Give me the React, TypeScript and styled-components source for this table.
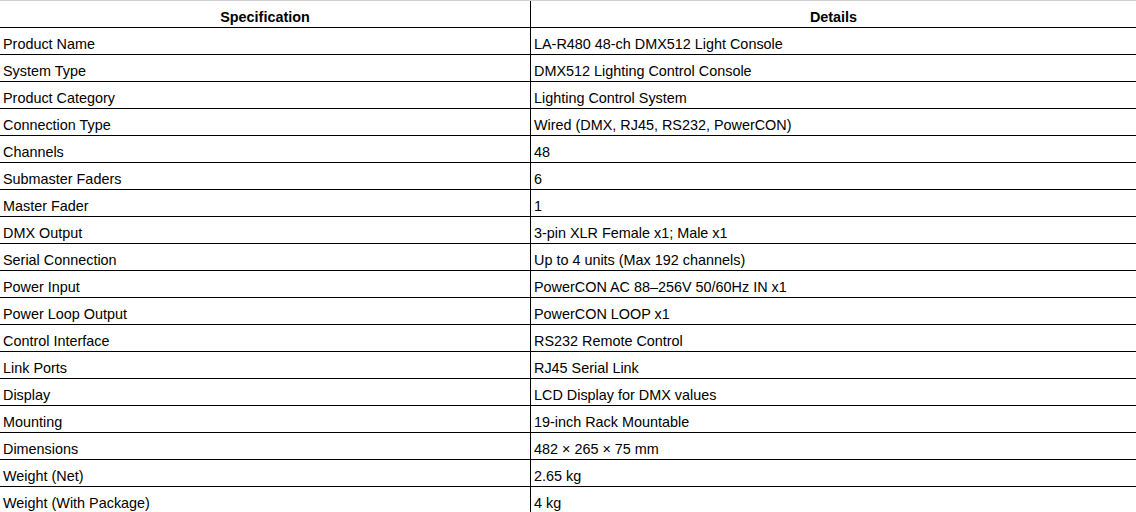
import React from "react";
import styled, { createGlobalStyle } from "styled-components";

const Global = createGlobalStyle`
  html, body { margin: 0; padding: 0; background: #fff; }
  body { font-family: "Liberation Sans", Arial, sans-serif; color: #000; }
`;

const Table = styled.div`
  width: 1136px;
  border-top: 1px solid #d0d0d0;
  display: grid;
  grid-template-columns: 531px 1fr;
`;

const Cell = styled.div<{ $head?: boolean; $first?: boolean }>`
  box-sizing: border-box;
  height: 27px;
  padding: 8px 3px 2px 3px;
  font-size: 14.4px;
  line-height: 16px;
  white-space: nowrap;
  overflow: hidden;
  border-bottom: 1px solid #000;
  border-right: ${(p) => (p.$first ? "1px solid #000" : "none")};
  font-weight: ${(p) => (p.$head ? 700 : 400)};
  text-align: ${(p) => (p.$head ? "center" : "left")};
`;

const rows: [string, string][] = [
  ["Product Name", "LA-R480 48-ch DMX512 Light Console"],
  ["System Type", "DMX512 Lighting Control Console"],
  ["Product Category", "Lighting Control System"],
  ["Connection Type", "Wired (DMX, RJ45, RS232, PowerCON)"],
  ["Channels", "48"],
  ["Submaster Faders", "6"],
  ["Master Fader", "1"],
  ["DMX Output", "3-pin XLR Female x1; Male x1"],
  ["Serial Connection", "Up to 4 units (Max 192 channels)"],
  ["Power Input", "PowerCON AC 88–256V 50/60Hz IN x1"],
  ["Power Loop Output", "PowerCON LOOP x1"],
  ["Control Interface", "RS232 Remote Control"],
  ["Link Ports", "RJ45 Serial Link"],
  ["Display", "LCD Display for DMX values"],
  ["Mounting", "19-inch Rack Mountable"],
  ["Dimensions", "482 × 265 × 75 mm"],
  ["Weight (Net)", "2.65 kg"],
  ["Weight (With Package)", "4 kg"],
];

export default function App() {
  return (
    <>
      <Global />
      <Table>
        <Cell $head $first>Specification</Cell>
        <Cell $head>Details</Cell>
        {rows.map(([k, v]) => (
          <React.Fragment key={k}>
            <Cell $first>{k}</Cell>
            <Cell>{v}</Cell>
          </React.Fragment>
        ))}
      </Table>
    </>
  );
}
